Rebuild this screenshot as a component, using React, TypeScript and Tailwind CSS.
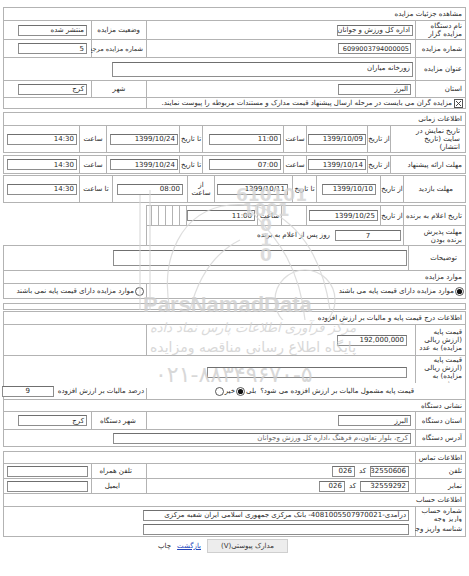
import React from "react";

const rowG = "grid gap-px";

function Cell({
  children,
  className = "",
}: {
  children?: React.ReactNode;
  className?: string;
}) {
  return (
    <div className={"bg-white flex items-center min-w-0 " + className}>
      {children}
    </div>
  );
}

function Lbl({ children, className = "" }: { children?: React.ReactNode; className?: string }) {
  return (
    <Cell className={"px-[3px] leading-[8px] " + className}>
      <span className="block">{children}</span>
    </Cell>
  );
}

function Inp({
  v,
  w,
  className = "",
  ltr = false,
}: {
  v?: string;
  w: string;
  className?: string;
  ltr?: boolean;
}) {
  return (
    <div
      className={
        "h-[11px] shrink-0 border border-[#8d8d8d] border-t-[#6f6f6f] bg-white leading-[8px] overflow-hidden whitespace-nowrap flex items-center " +
        (className.includes("px-") ? "" : "px-[2px] ") +
        w +
        " " +
        className
      }
    >
      <span dir={ltr ? "ltr" : "rtl"}>{v}</span>
    </div>
  );
}

function Group({ children, className = "" }: { children: React.ReactNode; className?: string }) {
  return <div className={"flex flex-col gap-px bg-[#b3b3b3] p-px " + className}>{children}</div>;
}

function CheckX() {
  return (
    <svg width="9" height="9" viewBox="0 0 9 9" className="shrink-0">
      <rect x="0.5" y="0.5" width="8" height="8" fill="#fff" stroke="#555" />
      <path d="M2 2 L7 7 M7 2 L2 7" stroke="#333" strokeWidth="0.9" />
    </svg>
  );
}

function Radio({ on = false }: { on?: boolean }) {
  return (
    <svg width="9" height="9" viewBox="0 0 9 9" className="shrink-0">
      <circle cx="4.5" cy="4.5" r="4" fill="#fff" stroke="#444" strokeWidth="0.9" />
      {on && <circle cx="4.5" cy="4.5" r="2.6" fill="#111" />}
    </svg>
  );
}

export default function App() {
  return (
    <div
      dir="rtl"
      className="relative min-h-[576px] bg-white text-[#2a2a2a] text-[7px] font-['DejaVu_Sans',sans-serif] overflow-hidden"
    >
      <div className="mx-[3px] pt-[7px]">
        {/* Section 1 */}
        <Group>
          <div className={rowG + " grid-cols-[1fr] h-[12px]"}>
            <Lbl>مشاهده جزئیات مزایده</Lbl>
          </div>
          <div className={rowG + " grid-cols-[49px_268px_54px_1fr] h-[18px]"}>
            <Lbl className="px-[1px]">نام دستگاه مزایده گزار</Lbl>
            <Cell className="pr-[2px]">
              <Inp w="w-[76px]" v="اداره کل ورزش و جوانان استان البرز" />
            </Cell>
            <Lbl className="pr-[6px]">وضعیت مزایده</Lbl>
            <Cell className="pr-[4px]">
              <Inp w="w-[69px]" v="منتشر شده" />
            </Cell>
          </div>
          <div className={rowG + " grid-cols-[49px_268px_54px_1fr] h-[17px]"}>
            <Lbl>شماره مزایده</Lbl>
            <Cell className="pr-[4px]">
              <Inp w="w-[73px]" className="px-[1px] text-[6.5px]" v="6099003794000005" ltr />
            </Cell>
            <Lbl className="whitespace-nowrap px-[1px] text-[6.5px]">شماره مزایده مرجع</Lbl>
            <Cell className="pr-[4px]">
              <Inp w="w-[69px]" v="5" />
            </Cell>
          </div>
          <div className={rowG + " grid-cols-[49px_1fr] h-[22px]"}>
            <Lbl>عنوان مزایده</Lbl>
            <Cell className="pr-[2px]">
              <div className="h-[15px] w-[301px] border border-[#8d8d8d] border-t-[#6f6f6f] px-[2px] pt-[1px] leading-[8px]">
                زورخانه میاران
              </div>
            </Cell>
          </div>
          <div className={rowG + " grid-cols-[49px_268px_54px_1fr] h-[16px]"}>
            <Lbl>استان</Lbl>
            <Cell className="pr-[4px]">
              <Inp w="w-[73px]" v="البرز" />
            </Cell>
            <Lbl className="justify-center">شهر</Lbl>
            <Cell className="pr-[4px]">
              <Inp w="w-[69px]" v="کرج" />
            </Cell>
          </div>
          <div className={rowG + " grid-cols-[318px_1fr] h-[10px]"}>
            <Cell className="pr-[2px] gap-[2px] whitespace-nowrap leading-[8px] overflow-visible">
              <CheckX />
              <span>
                مزایده گران می بایست در مرحله ارسال پیشنهاد قیمت مدارک و مستندات مربوطه را پیوست نمایند.
              </span>
            </Cell>
            <Cell />
          </div>
        </Group>

        {/* Section 2: time info */}
        <Group className="mt-[3px]">
          <div className={rowG + " grid-cols-[1fr] h-[12px]"}>
            <Lbl>اطلاعات زمانی</Lbl>
          </div>
          <div className={rowG + " grid-cols-[74px_22px_60px_22px_80px_22px_72px_26px_1fr] h-[26px]"}>
            <Lbl className="pr-[5px] pl-[20px]">تاریخ نمایش در سایت (تاریخ انتشار)</Lbl>
            <Lbl className="px-0 justify-center whitespace-nowrap">از تاریخ</Lbl>
            <Cell className="pr-[1px]">
              <Inp w="w-[58px]" v="1399/10/09" ltr />
            </Cell>
            <Lbl className="justify-center px-0">ساعت</Lbl>
            <Cell className="pr-[2px]">
              <Inp w="w-[72px]" v="11:00" ltr />
            </Cell>
            <Lbl className="px-0 justify-center whitespace-nowrap">تا تاریخ</Lbl>
            <Cell className="pr-[1px]">
              <Inp w="w-[68px]" v="1399/10/24" ltr />
            </Cell>
            <Lbl className="justify-center px-0">ساعت</Lbl>
            <Cell className="pr-[2px]">
              <Inp w="w-[70px]" v="14:30" ltr />
            </Cell>
          </div>
        </Group>
        <Group className="mt-[2px]">
          <div className={rowG + " grid-cols-[74px_22px_60px_22px_80px_22px_72px_26px_1fr] h-[17px]"}>
            <Lbl className="whitespace-nowrap">مهلت ارائه پیشنهاد</Lbl>
            <Lbl className="px-0 justify-center whitespace-nowrap">از تاریخ</Lbl>
            <Cell className="pr-[1px]">
              <Inp w="w-[58px]" v="1399/10/14" ltr />
            </Cell>
            <Lbl className="justify-center px-0">ساعت</Lbl>
            <Cell className="pr-[2px]">
              <Inp w="w-[72px]" v="07:00" ltr />
            </Cell>
            <Lbl className="px-0 justify-center whitespace-nowrap">تا تاریخ</Lbl>
            <Cell className="pr-[1px]">
              <Inp w="w-[68px]" v="1399/10/24" ltr />
            </Cell>
            <Lbl className="justify-center px-0">ساعت</Lbl>
            <Cell className="pr-[2px]">
              <Inp w="w-[70px]" v="14:30" ltr />
            </Cell>
          </div>
        </Group>

        {/* Section 3: visit */}
        <Group className="mt-[1px]">
          <div className={rowG + " grid-cols-[61px_22px_63px_23px_77px_26px_74px_32px_1fr] h-[26px]"}>
            <Lbl className="pr-[12px] whitespace-nowrap">مهلت بازدید</Lbl>
            <Lbl className="px-0 justify-center whitespace-nowrap">از تاریخ</Lbl>
            <Cell className="pr-[4px]">
              <Inp w="w-[54px]" v="1399/10/10" ltr />
            </Cell>
            <Lbl className="px-0 justify-center whitespace-nowrap">تا تاریخ</Lbl>
            <Cell className="pr-[4px]">
              <Inp w="w-[71px]" v="1399/10/11" ltr />
            </Cell>
            <Lbl className="justify-center text-center px-[4px]">از ساعت</Lbl>
            <Cell className="pr-[4px]">
              <Inp w="w-[66px]" v="08:00" ltr />
            </Cell>
            <Lbl className="justify-center whitespace-nowrap px-0">تا ساعت</Lbl>
            <Cell className="pr-[2px]">
              <Inp w="w-[70px]" v="14:30" ltr />
            </Cell>
          </div>
        </Group>

        {/* Section 4: winner */}
        <Group className="mt-[2px] w-[320px]">
          <div className={rowG + " grid-cols-[61px_22px_73px_24px_23px_70px_6px_6px_6px_6px_6px_1fr] h-[19px]"}>
            <Lbl className="whitespace-nowrap">تاریخ اعلام به برنده</Lbl>
            <Lbl className="px-0 justify-center whitespace-nowrap">از تاریخ</Lbl>
            <Cell className="pr-[2px]">
              <Inp w="w-[69px]" v="1399/10/25" ltr />
            </Cell>
            <Cell />
            <Lbl className="justify-center px-0">ساعت</Lbl>
            <Cell className="pr-[2px]">
              <Inp w="w-[68px]" v="11:00" ltr />
            </Cell>
            <Cell />
            <Cell />
            <Cell />
            <Cell />
            <Cell />
            <Cell />
          </div>
          <div className={rowG + " grid-cols-[61px_1fr] h-[19px]"}>
            <Lbl className="px-[1px]">مهلت پذیرش برنده بودن</Lbl>
            <Cell className="pr-[2px] gap-[5px]">
              <Inp w="w-[66px] justify-center" v="7" />
              <span className="whitespace-nowrap">روز پس از اعلام به برنده</span>
            </Cell>
          </div>
        </Group>

        {/* Section 5 */}
        <Group className="-mt-px">
          <div className={rowG + " grid-cols-[56px_1fr] h-[24px]"}>
            <Lbl className="pr-[8px]">توضیحات</Lbl>
            <Cell className="pr-[1px]">
              <div className="h-[16px] w-[294px] border border-[#8d8d8d] border-t-[#6f6f6f]" />
            </Cell>
          </div>
          <div className={rowG + " grid-cols-[1fr] h-[12px]"}>
            <Lbl>موارد مزایده</Lbl>
          </div>
          <div className={rowG + " grid-cols-[318px_1fr] h-[14px]"}>
            <Cell className="pr-[1px] gap-[1px] whitespace-nowrap">
              <Radio on />
              <span>موارد مزایده دارای قیمت پایه می باشند</span>
            </Cell>
            <Cell className="pr-[2px] gap-[1px] whitespace-nowrap">
              <Radio />
              <span>موارد مزایده دارای قیمت پایه نمی باشند</span>
            </Cell>
          </div>
        </Group>

        <Group className="mt-[4px]">
          <div className="h-[5px] bg-white" />
        </Group>

        {/* Price + address */}
        <Group className="mt-[1px]">
          <div className={rowG + " grid-cols-[1fr] h-[12px]"}>
            <Lbl>اطلاعات درج قیمت پایه و مالیات بر ارزش افزوده</Lbl>
          </div>
          <div className={rowG + " grid-cols-[49px_268px_1fr] h-[30px]"}>
            <Lbl className="px-[1px]">قیمت پایه (ارزش ریالی مزایده) به عدد</Lbl>
            <Cell className="pr-[8px]">
              <Inp w="w-[70px]" v="192,000,000" ltr />
            </Cell>
            <Cell />
          </div>
          <div className={rowG + " grid-cols-[49px_1fr] h-[26px]"}>
            <Lbl className="px-[1px]">قیمت پایه (ارزش ریالی مزایده) به حروف</Lbl>
            <Cell className="pr-[8px]">
              <Inp w="w-[200px]" v="" />
            </Cell>
          </div>
          <div className={rowG + " grid-cols-[318px_1fr] h-[16px]"}>
            <Cell className="pr-[51px] gap-[4px] whitespace-nowrap">
              <span>قیمت پایه مشمول مالیات بر ارزش افزوده می شود؟</span>
              <span className="flex items-center gap-[1px]">
                <span>بلی</span>
                <Radio on />
                <span>خیر</span>
                <Radio />
              </span>
            </Cell>
            <Cell className="pr-[2px] gap-[4px] whitespace-nowrap">
              <span>درصد مالیات بر ارزش افزوده</span>
              <Inp w="w-[52px] justify-center" v="9" />
            </Cell>
          </div>
          <div className={rowG + " grid-cols-[1fr] h-[11px]"}>
            <Lbl>نشانی دستگاه</Lbl>
          </div>
          <div className={rowG + " grid-cols-[49px_268px_54px_1fr] h-[17px]"}>
            <Lbl className="whitespace-nowrap">استان دستگاه</Lbl>
            <Cell className="pr-[4px]">
              <Inp w="w-[73px]" v="البرز" />
            </Cell>
            <Lbl className="pr-[10px] whitespace-nowrap">شهر دستگاه</Lbl>
            <Cell className="pr-[4px]">
              <Inp w="w-[69px]" v="کرج" />
            </Cell>
          </div>
          <div className={rowG + " grid-cols-[49px_1fr] h-[16px]"}>
            <Lbl className="whitespace-nowrap">آدرس دستگاه</Lbl>
            <Cell className="pr-[4px]">
              <Inp
                w="w-[298px]"
                className="text-[#666]"
                v="کرج، بلوار تعاون،م فرهنگ ،اداره کل ورزش وجوانان"
              />
            </Cell>
          </div>
        </Group>

        {/* Contact */}
        <Group className="mt-[4px]">
          <div className={rowG + " grid-cols-[49px_1fr] h-[11px]"}>
            <Lbl className="justify-center px-0 whitespace-nowrap">اطلاعات تماس</Lbl>
            <Cell />
          </div>
          <div className={rowG + " grid-cols-[49px_268px_54px_1fr] h-[14px]"}>
            <Lbl>تلفن</Lbl>
            <Cell className="pr-[6px] gap-[4px]">
              <Inp w="w-[39px]" v="32550606" ltr />
              <span>کد</span>
              <Inp w="w-[23px]" v="026" ltr />
            </Cell>
            <Lbl className="pr-[14px] whitespace-nowrap">تلفن همراه</Lbl>
            <Cell className="pr-[3px]">
              <Inp w="w-[81px]" v="" />
            </Cell>
          </div>
          <div className={rowG + " grid-cols-[49px_268px_54px_1fr] h-[14px]"}>
            <Lbl>نمابر</Lbl>
            <Cell className="pr-[6px] gap-[4px]">
              <Inp w="w-[49px]" v="32559292" ltr />
              <span>کد</span>
              <Inp w="w-[26px]" v="026" ltr />
            </Cell>
            <Lbl className="pr-[26px]">ایمیل</Lbl>
            <Cell className="pr-[3px]">
              <Inp w="w-[81px]" v="" />
            </Cell>
          </div>
          <div className={rowG + " grid-cols-[1fr] h-[12px]"}>
            <Lbl>اطلاعات حساب</Lbl>
          </div>
          <div className={rowG + " grid-cols-[49px_1fr] h-[14px]"}>
            <Lbl className="px-[1px]">شماره حساب واریز وجه</Lbl>
            <Cell className="pr-[6px]">
              <Inp
                w="w-[266px]"
                v="درآمدی-4081005507970021- بانک مرکزی جمهوری اسلامی ایران شعبه مرکزی"
              />
            </Cell>
          </div>
          <div className={rowG + " grid-cols-[49px_1fr] h-[14px]"}>
            <Lbl className="whitespace-nowrap">شناسه واریز وجه</Lbl>
            <Cell className="pr-[6px]">
              <Inp w="w-[266px]" v="" />
            </Cell>
          </div>
        </Group>

        {/* Buttons */}
        <div className="mt-[2px] flex items-center gap-[6px] pr-[178px]">
          <div className="h-[14px] px-[13px] flex items-center bg-[#ededed] border border-[#cfcfcf] text-[#333] whitespace-nowrap">
            مدارک پیوستی(V)
          </div>
          <span className="text-[#2244bb] underline">بازگشت</span>
          <span>چاپ</span>
        </div>
      </div>

      {/* Watermark overlay */}
      <div className="pointer-events-none absolute inset-0 opacity-80">
        <svg className="absolute left-[130px] top-[170px]" width="220" height="150" viewBox="0 0 220 150" fill="none" stroke="#d6d6d6" strokeWidth="1.2">
          <path d="M40 140 C 30 90, 50 40, 100 35 C 150 30, 190 70, 200 140" />
          <path d="M20 20 L 20 140" />
          <path d="M10 25 L 10 140" />
          <path d="M120 40 C 150 70, 170 100, 175 150" />
          <circle cx="175" cy="130" r="30" />
          <path d="M60 140 C 70 100, 90 80, 110 70" />
        </svg>
        <div className="absolute left-[236px] top-[188px] leading-[15px] font-['DejaVu_Sans',sans-serif] font-bold text-[17px] text-[#d4d4d4] text-center w-[60px]" dir="ltr">
          610101
          <br />
          1001
          <br />0<br />1<br />0
        </div>
        <div className="absolute left-[143px] top-[294px] font-['Liberation_Sans',sans-serif] font-bold text-[22px] leading-[22px] text-[#cfcfcf]" dir="ltr">
          ParsNamadData
        </div>
        <div className="absolute left-[150px] top-[318px] font-['DejaVu_Sans',sans-serif] italic text-[13px] text-[#d2d2d2] whitespace-nowrap" dir="rtl">
          مرکز فرآوری اطلاعات پارس نماد داده
        </div>
        <div className="absolute left-[150px] top-[337px] font-['DejaVu_Sans',sans-serif] text-[14px] text-[#cfcfcf] whitespace-nowrap" dir="rtl">
          پایگاه اطلاع رسانی مناقصه ومزایده
        </div>
        <div className="absolute left-[155px] top-[358px] font-['DejaVu_Sans',sans-serif] text-[22px] text-[#cfcfcf] whitespace-nowrap" dir="ltr">
          ۰۲۱-۸۸۳۴۹۶۷۰-۵
        </div>
      </div>
    </div>
  );
}
